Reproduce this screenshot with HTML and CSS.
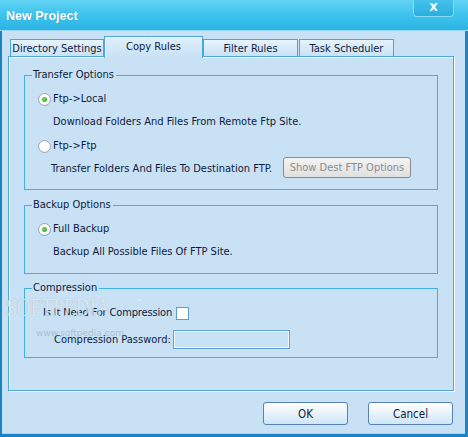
FILE: index.html
```html
<!DOCTYPE html>
<html>
<head>
<meta charset="utf-8">
<link rel="stylesheet" href="styles.css">
</head>
<body>
<div class="window">
  <div class="titlebar">
    <span class="title">New Project</span>
    <div class="close">X</div>
  </div>
  <div class="client">
    <div class="tabs">
      <div class="tab tab-dir">Directory Settings</div>
      <div class="tab tab-copy active">Copy Rules</div>
      <div class="tab tab-filter">Filter Rules</div>
      <div class="tab tab-task">Task Scheduler</div>
    </div>
    <div class="panel">
      <div class="group g-transfer">
        <span class="legend">Transfer Options</span>
        <div class="row opt"><span class="radio checked"></span><span>Ftp-&gt;Local</span></div>
        <div class="row desc d1">Download Folders And Files From Remote Ftp Site.</div>
        <div class="row opt o2"><span class="radio"></span><span>Ftp-&gt;Ftp</span></div>
        <div class="row desc d2"><span class="d2text">Transfer Folders And Files To Destination FTP.</span><span class="btn-disabled">Show Dest FTP Options</span></div>
      </div>
      <div class="group g-backup">
        <span class="legend">Backup Options</span>
        <div class="row opt"><span class="radio checked"></span><span>Full Backup</span></div>
        <div class="row desc d1">Backup All Possible Files Of FTP Site.</div>
      </div>
      <div class="group g-comp">
        <span class="legend">Compression</span>
        <div class="row c1"><span class="c1text">Is It Need For Compression</span><span class="checkbox"></span></div>
        <div class="row c2"><span class="c2text">Compression Password:</span><span class="input"></span></div>
      </div>
      <div class="watermark"><span class="wm-big">SOFTPEDIA</span><span class="wm-tm">™</span><span class="wm-small">www.softpedia.com</span></div>
    </div>
    <div class="buttons">
      <div class="btn">OK</div>
      <div class="btn">Cancel</div>
    </div>
  </div>
</div>
</body>
</html>
```
FILE: styles.css
```css
* { box-sizing: border-box; }
html, body { margin: 0; padding: 0; }
body {
  width: 468px;
  height: 437px;
  overflow: hidden;
  background: #c9e1f4;
  font-family: "DejaVu Sans Condensed", "DejaVu Sans", sans-serif;
  font-size: 11px;
  color: #0d1b3e;
}
.window {
  width: 468px;
  height: 437px;
  display: flex;
  flex-direction: column;
}
.titlebar {
  height: 31px;
  background: linear-gradient(#62d3f3 0%, #40c4ee 45%, #2bb4e4 100%);
  border-bottom: 1px solid #9dd9f2;
  display: flex;
  align-items: flex-start;
  padding-left: 6px;
  padding-right: 14px;
  flex: none;
}
.title {
  font-family: "Liberation Sans", sans-serif;
  font-weight: bold;
  font-size: 12.5px;
  color: #fff;
  margin-top: 9px;
  text-shadow: 0 0 1px rgba(0, 60, 110, 0.35);
}
.close {
  margin-left: auto;
  width: 41px;
  height: 17px;
  border: 1px solid #8ad9f3;
  border-top: none;
  border-radius: 0 0 4px 4px;
  background: linear-gradient(#45c2ec, #2aaee0);
  color: #fff;
  font-family: "DejaVu Sans", sans-serif;
  font-weight: bold;
  font-size: 11px;
  text-align: center;
  line-height: 15px;
}
.client {
  flex: 1;
  border-left: 2px solid #1a84c6;
  border-right: 3px solid #1a84c6;
  border-bottom: 3px solid #1a84c6;
  box-shadow: inset 0 -1px 0 #a9d1ee;
  display: flex;
  flex-direction: column;
}
.tabs {
  display: flex;
  align-items: flex-end;
  height: 20px;
  margin-top: 5px;
  padding-left: 8px;
}
.tab {
  height: 17px;
  border: 1px solid #47a7de;
  border-bottom: none;
  background: linear-gradient(#e6f3fc, #c9e2f5);
  display: flex;
  align-items: center;
  justify-content: center;
  line-height: 13px;
  padding-top: 1px;
}
.tab-dir { width: 94px; }
.tab-copy { width: 99px; }
.tab-filter { width: 95px; }
.tab-task { width: 95px; margin-left: 1px; }
.tab.active {
  height: 22px;
  margin-bottom: -2px;
  position: relative;
  z-index: 1;
  background: linear-gradient(#dff0fb, #c9e1f4);
  padding-top: 0;
  padding-bottom: 2px;
  box-shadow: inset 1px 1px 0 #fff;
}
.panel {
  position: relative;
  margin-left: 6px;
  width: 446px;
  height: 335px;
  border: 1px solid #4aa8de;
  box-shadow: 1px 1px 0 #fff, inset 1px 1px 0 #fff;
  padding: 18px 0 0 15px;
}
.group {
  position: relative;
  width: 414px;
  border: 1px solid #3fb1e8;
}
.legend {
  position: absolute;
  top: -8px;
  left: 7px;
  padding: 0 2px 0 1px;
  background: #c9e1f4;
  line-height: 14px;
}
.row {
  display: flex;
  align-items: center;
  height: 16px;
  line-height: 16px;
  white-space: nowrap;
}
.radio {
  width: 13px;
  height: 13px;
  border-radius: 50%;
  border: 1px solid #9ea8b2;
  background: radial-gradient(circle at 50% 40%, #ffffff 40%, #e4ebf0 100%);
  margin-right: 2px;
  position: relative;
  flex: none;
}
.radio.checked::after {
  content: "";
  position: absolute;
  left: 3px;
  top: 3px;
  width: 5px;
  height: 5px;
  border-radius: 50%;
  background: radial-gradient(circle at 40% 40%, #7fd35e, #2f9a24);
}
.g-transfer { padding: 15px 0 11px 13px; }
.g-transfer .d1 { margin-top: 7px; padding-left: 15px; }
.g-transfer .o2 { margin-top: 8px; }
.g-transfer .d2 { margin-top: 3px; height: 21px; padding-left: 13px; }
.d2text { padding-top: 3px; }
.btn-disabled {
  margin-left: auto;
  margin-right: 26px;
  width: 128px;
  height: 21px;
  border: 1px solid #8b8b8b;
  border-radius: 3px;
  background: linear-gradient(#f4f4f4, #e0e0e0);
  color: #8d8d8d;
  display: flex;
  align-items: center;
  justify-content: center;
  line-height: 13px;
}
.g-backup { margin-top: 15px; padding: 15px 0 13px 13px; }
.g-backup .d1 { margin-top: 7px; padding-left: 15px; }
.g-comp { margin-top: 14px; padding: 16px 0 8px 0; }
.c1 { padding-left: 18px; }
.c1text { letter-spacing: -0.15px; }
.checkbox {
  width: 13px;
  height: 13px;
  border: 1px solid #5b9fd0;
  background: #fff;
  margin-left: 4px;
  flex: none;
}
.c2 { margin-top: 9px; height: 19px; padding-left: 29px; }
.input {
  width: 117px;
  height: 19px;
  border: 1px solid #5aa2d4;
  box-shadow: inset 0 0 0 1px #f4f9fd;
  background: #c9e1f4;
  margin-left: 2px;
  flex: none;
}
.watermark {
  position: absolute;
  left: -3px;
  top: 238px;
  width: 150px;
  height: 50px;
  pointer-events: none;
}
.wm-big {
  position: absolute;
  left: 0;
  top: 0;
  display: inline-block;
  font-family: "Liberation Serif", serif;
  font-size: 26px;
  line-height: 26px;
  color: rgba(255, 255, 255, 0.65);
  text-shadow: 0 0 1px rgba(110, 130, 150, 0.5);
  transform: scaleX(0.74);
  transform-origin: 0 0;
  white-space: nowrap;
}
.wm-tm {
  position: absolute;
  left: 130px;
  top: 3px;
  font-size: 7px;
  color: rgba(255, 255, 255, 0.7);
}
.wm-small {
  position: absolute;
  left: 30px;
  top: 33px;
  font-family: "DejaVu Sans", sans-serif;
  font-size: 9px;
  color: rgba(150, 170, 185, 0.6);
  white-space: nowrap;
}
.buttons {
  display: flex;
  justify-content: flex-end;
  gap: 20px;
  margin-top: 11px;
  padding-right: 12px;
}
.btn {
  width: 85px;
  height: 23px;
  border: 1px solid #5682b2;
  border-radius: 3px;
  background: linear-gradient(#ffffff 0%, #eaf4fc 45%, #cfe5f6 100%);
  display: flex;
  align-items: center;
  justify-content: center;
  font-size: 11.5px;
}
```
